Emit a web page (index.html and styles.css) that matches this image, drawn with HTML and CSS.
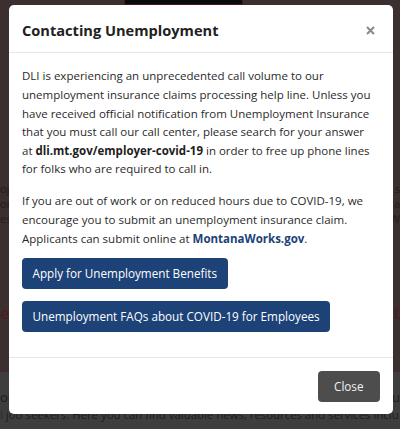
FILE: index.html
```html
<!DOCTYPE html>
<html lang="en">
<head>
<meta charset="utf-8">
<title>Contacting Unemployment</title>
<link rel="stylesheet" href="styles.css">
</head>
<body>
<div class="page">
  <header class="hero">
    <div class="logo"></div>
    <div class="hero-lines">
      <div class="bgline"><span>op</span><span>s</span></div>
      <div class="bgline"><span>on</span><span>ra</span></div>
      <div class="bgline"><span>es</span><span>W</span></div>
    </div>
    <div class="bgline hero-title"><span>es</span><span>t</span></div>
  </header>
  <section class="intro">
    <div class="bgline"><span>or</span><span>u</span></div>
    <p class="intro-text"><a class="intro-link">l</a> job seekers. Here you can find valuable news, resources and services inclu</p>
  </section>
</div>

<div class="backdrop">
  <div class="modal" role="dialog" aria-labelledby="modal-title">
    <div class="modal-header">
      <h2 id="modal-title" class="modal-title">Contacting Unemployment</h2>
      <button class="modal-x" aria-label="Close">
        <svg width="9" height="9" viewBox="0 0 9 9"><path d="M1 1 L8 8 M8 1 L1 8" stroke="#8a8a8a" stroke-width="2.1" fill="none"/></svg>
      </button>
    </div>
    <div class="modal-body">
      <p class="para">DLI is experiencing an unprecedented call volume to our<br>unemployment insurance claims processing help line. Unless you<br>have received official notification from Unemployment Insurance<br>that you must call our call center, please search for your answer<br>at <strong class="strong-link">dli.mt.gov/employer-covid-19</strong> in order to free up phone lines<br>for folks who are required to call in.</p>
      <p class="para para-last">If you are out of work or on reduced hours due to COVID-19, we<br>encourage you to submit an unemployment insurance claim.<br>Applicants can submit online at <a class="blue-link">MontanaWorks.gov</a>.</p>
      <div class="actions">
        <a class="btn-primary">Apply for Unemployment Benefits</a>
        <a class="btn-primary">Unemployment FAQs about COVID-19 for Employees</a>
      </div>
    </div>
    <div class="modal-footer">
      <button class="btn-close">Close</button>
    </div>
  </div>
</div>
</body>
</html>
```
FILE: styles.css
```css
* { box-sizing: border-box; }

html, body {
  margin: 0;
  padding: 0;
}

body {
  width: 400px;
  height: 429px;
  overflow: hidden;
  background: #3e3e3e;
  font-family: "Open Sans", "Noto Sans", sans-serif;
}

.page {
  width: 400px;
}

.hero {
  height: 372px;
  background: #3b2f2f;
}

.logo {
  margin-left: 124px;
  width: 119px;
  height: 5px;
  background: #0b0b0b;
  border: 1px solid #4a1818;
  border-top: none;
}

.hero-lines {
  margin-top: 176px;
  color: #241c1c;
  font-size: 11px;
  line-height: 15px;
}

.bgline {
  display: flex;
  justify-content: space-between;
}

.hero-title {
  margin-top: 77px;
  color: #4a1c1c;
  font-size: 17px;
  line-height: 20px;
}

.intro {
  padding-top: 16px;
  color: #1c1c1c;
  font-size: 13px;
  line-height: 18px;
}

.intro-text {
  margin: 0;
  white-space: nowrap;
  font-size: 11.4px;
}

.intro-link {
  color: #1b2c4c;
}

/* modal */
.backdrop {
  position: fixed;
  inset: 0;
  display: flex;
  align-items: flex-start;
  padding: 5px 0 0 9px;
}

.modal {
  width: 383.5px;
  background: #ffffff;
  border-radius: 5px;
  color: #2a2a2a;
}

.modal-header {
  height: 48px;
  display: flex;
  align-items: center;
  justify-content: space-between;
  padding: 3px 18px 0 13px;
  border-bottom: 1px solid #e6e6e6;
}

.modal-title {
  margin: 0;
  font-size: 14.6px;
  font-weight: 700;
  color: #212121;
}

.modal-x {
  border: none;
  background: none;
  padding: 0;
  width: 9px;
  height: 9px;
  display: flex;
}

.modal-body {
  padding: 14.4px 8px 25px 13px;
  font-size: 11.5px;
  line-height: 18.6px;
}

.para {
  margin: 0 0 13.4px;
  white-space: nowrap;
}

.para-last {
  margin-bottom: 10px;
}

.strong-link {
  font-weight: 700;
  color: #1d1d1d;
}

.blue-link {
  font-weight: 700;
  color: #1c4278;
}

.actions {
  display: flex;
  flex-direction: column;
  align-items: flex-start;
  gap: 12.7px;
}

.btn-primary {
  display: block;
  height: 30.5px;
  line-height: 30.5px;
  padding: 0 10.5px;
  background: #1c4278;
  color: #ffffff;
  border-radius: 4px;
  font-size: 11.7px;
}

.modal-footer {
  display: flex;
  justify-content: flex-end;
  padding: 13px 12.5px 12px;
  border-top: 1px solid #e6e6e6;
}

.btn-close {
  height: 31px;
  padding: 0 16.5px;
  border: none;
  border-radius: 4px;
  background: #4d4d4d;
  color: #f2f2f2;
  font-family: "Open Sans", "Noto Sans", sans-serif;
  font-size: 11.7px;
}
```
